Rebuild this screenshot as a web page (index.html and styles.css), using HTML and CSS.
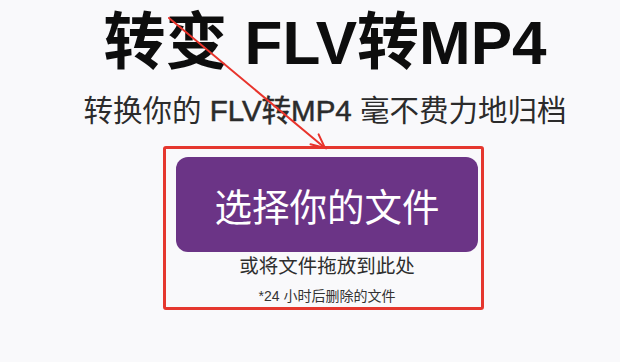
FILE: index.html
```html
<!DOCTYPE html>
<html lang="zh">
<head>
<meta charset="utf-8">
<title>转变 FLV转MP4</title>
<link rel="stylesheet" href="styles.css">
</head>
<body>
<main class="page">
  <h1 class="title">转变 FLV转MP4</h1>
  <p class="subtitle">转换你的 <strong>FLV转MP4</strong> 毫不费力地归档</p>
  <div class="highlight">
    <div class="dropzone">
      <button class="choose">选择你的文件</button>
      <p class="drop">或将文件拖放到此处</p>
      <p class="note">*24 小时后删除的文件</p>
    </div>
  </div>
</main>
<svg class="arrow" width="620" height="362" viewBox="0 0 620 362" xmlns="http://www.w3.org/2000/svg">
  <g stroke="#e8342c" stroke-width="2" stroke-linecap="round" fill="none">
    <line x1="169" y1="18" x2="325" y2="148"/>
    <polyline points="310.5,144.2 325,148 318.6,134.4"/>
  </g>
</svg>
</body>
</html>
```

FILE: styles.css
```css
html, body {
  margin: 0;
  padding: 0;
}
body {
  width: 620px;
  height: 362px;
  overflow: hidden;
  background: #f9f9fb;
  font-family: "Liberation Sans", "Noto Sans CJK SC", sans-serif;
  color: #222;
  position: relative;
}
.page {
  display: flex;
  flex-direction: column;
  align-items: center;
  padding-left: 30px;
}
.title {
  margin: 0;
  font-size: 62px;
  line-height: 86px;
  font-weight: 700;
  color: #0d0d0d;
}
.subtitle {
  margin: 5px 0 0;
  font-size: 29.5px;
  line-height: 40px;
  color: #2b2b2b;
}
.subtitle strong {
  font-weight: 400;
  -webkit-text-stroke: 0.5px #2b2b2b;
}
.highlight {
  margin-top: 15px;
  margin-left: -3px;
  width: 302px;
  height: 150px;
  border: 3px solid #e5372e;
  border-radius: 3px;
  padding: 8px 3px 0 10px;
}
.dropzone {
  width: 302px;
  display: flex;
  flex-direction: column;
  align-items: center;
}
.choose {
  width: 302px;
  height: 95px;
  border: none;
  border-radius: 12px;
  background: #6b3486;
  color: #ffffff;
  font-family: "Liberation Sans", "Noto Sans CJK SC", sans-serif;
  font-size: 37.5px;
  padding: 0;
  cursor: pointer;
}
.drop {
  margin: 1px 0 0;
  font-size: 19.5px;
  line-height: 26px;
  color: #2e2e2e;
}
.note {
  margin: 7px 0 0;
  font-size: 14px;
  line-height: 20px;
  color: #333;
}
.arrow {
  position: absolute;
  left: 0;
  top: 0;
  pointer-events: none;
}
```
